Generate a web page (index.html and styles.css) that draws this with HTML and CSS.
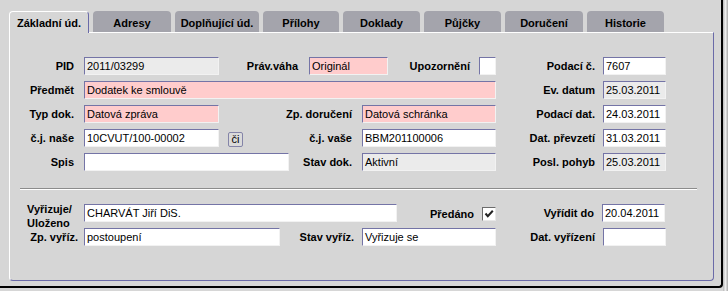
FILE: index.html
```html
<!DOCTYPE html>
<html lang="cs">
<head>
<meta charset="utf-8">
<title>Základní údaje</title>
<link rel="stylesheet" href="styles.css">
</head>
<body>
<div class="screen">
  <div class="window">
    <div class="tabs">
      <div class="tab active">Základní úd.</div>
      <div class="tab">Adresy</div>
      <div class="tab">Doplňující úd.</div>
      <div class="tab">Přílohy</div>
      <div class="tab">Doklady</div>
      <div class="tab">Půjčky</div>
      <div class="tab">Doručení</div>
      <div class="tab">Historie</div>
    </div>
    <div class="panel">
      <div class="rows">
        <div class="row">
          <div class="part">
            <span class="lbl l-first">PID</span>
            <span class="fld grey w135">2011/03299</span>
            <span class="lbl l-prav">Práv.váha</span>
            <span class="fld pink w79">Originál</span>
            <span class="lbl l-upoz">Upozornění</span>
            <span class="fld white w17"></span>
          </div>
          <span class="lbl l-right">Podací č.</span>
          <span class="fld white w63">7607</span>
        </div>
        <div class="row">
          <div class="part">
            <span class="lbl l-first">Předmět</span>
            <span class="fld pink w412">Dodatek ke smlouvě</span>
          </div>
          <span class="lbl l-right">Ev. datum</span>
          <span class="fld grey w63">25.03.2011</span>
        </div>
        <div class="row">
          <div class="part">
            <span class="lbl l-first">Typ dok.</span>
            <span class="fld pink w135">Datová zpráva</span>
            <span class="lbl l-zp">Zp. doručení</span>
            <span class="fld pink w134">Datová schránka</span>
          </div>
          <span class="lbl l-right">Podací dat.</span>
          <span class="fld white w63">24.03.2011</span>
        </div>
        <div class="row">
          <div class="part">
            <span class="lbl l-first">č.j. naše</span>
            <span class="fld white w135">10CVUT/100-00002</span>
            <span class="btn">či</span>
            <span class="lbl l-cj">č.j. vaše</span>
            <span class="fld white w134">BBM201100006</span>
          </div>
          <span class="lbl l-right">Dat. převzetí</span>
          <span class="fld white w63">31.03.2011</span>
        </div>
        <div class="row">
          <div class="part">
            <span class="lbl l-first">Spis</span>
            <span class="fld white w205"></span>
            <span class="lbl l-stav">Stav dok.</span>
            <span class="fld grey w134">Aktivní</span>
          </div>
          <span class="lbl l-right">Posl. pohyb</span>
          <span class="fld grey w63">25.03.2011</span>
        </div>
      </div>
      <div class="sep"></div>
      <div class="rows">
        <div class="row">
          <div class="part">
            <span class="lbl l-two">Vyřizuje/<br>Uloženo</span>
            <span class="fld white w313">CHARVÁT Jiří DiS.</span>
            <span class="lbl l-pred">Předáno</span>
            <span class="check"><svg width="12" height="12" viewBox="0 0 12 12"><path d="M2.5 5.5 L4.8 8.2 L9.8 2.8" fill="none" stroke="#222" stroke-width="2"/></svg></span>
          </div>
          <span class="lbl l-right2">Vyřídit do</span>
          <span class="fld white w63">20.04.2011</span>
        </div>
        <div class="row">
          <div class="part">
            <span class="lbl l-zpv">Zp. vyříz.</span>
            <span class="fld white w196">postoupení</span>
            <span class="lbl l-stavv">Stav vyříz.</span>
            <span class="fld white w134">Vyřizuje se</span>
          </div>
          <span class="lbl l-right">Dat. vyřízení</span>
          <span class="fld white w63"></span>
        </div>
      </div>
    </div>
  </div>
  <div class="edge"></div>
</div>
</body>
</html>
```
FILE: styles.css
```css
html, body {
  margin: 0;
  padding: 0;
}
body {
  background: #d6d6d6;
  font-family: "Liberation Sans", Arial, sans-serif;
  font-size: 11px;
  color: #000;
  overflow: hidden;
}
.screen {
  display: flex;
  width: 728px;
  height: 291px;
}
.window {
  flex: none;
  box-sizing: border-box;
  width: 723px;
  height: 288px;
  padding: 11px 0 0 9px;
  border-right: 2px solid #000;
  border-bottom: 2px solid #000;
  border-bottom-right-radius: 4px;
}
.edge {
  flex: 1;
  background: linear-gradient(90deg, #b8b8b8, #ededed 50%, #a8a8a8);
}

/* tabs */
.tabs {
  display: flex;
  gap: 4px;
  height: 21px;
}
.tab {
  flex: none;
  box-sizing: border-box;
  height: 21px;
  padding-top: 2px;
  background: #a4a4ac;
  border-radius: 4px 4px 0 0;
  font-weight: bold;
  display: flex;
  align-items: center;
  justify-content: center;
  white-space: nowrap;
}
.tab:nth-child(1) { width: 80px; }
.tab:nth-child(2) { width: 78px; }
.tab:nth-child(3) { width: 84px; }
.tab:nth-child(4) { width: 76px; }
.tab:nth-child(5) { width: 77px; }
.tab:nth-child(6) { width: 77px; }
.tab:nth-child(7) { width: 78px; }
.tab:nth-child(8) { width: 77px; }
.tab.active {
  position: relative;
  z-index: 1;
  height: 22px;
  background: #d6d6d6;
  border-top: 1px solid #fff;
  border-left: 1px solid #fff;
  border-right: 1px solid #6a6aa8;
  padding-top: 1px;
}

/* panel */
.panel {
  box-sizing: border-box;
  width: 705px;
  height: 249px;
  border-top: 1px solid #fff;
  border-left: 1px solid #fff;
  border-right: 1px solid #6a6aa8;
  border-bottom: 1px solid #6a6aa8;
  border-radius: 0 0 4px 4px;
  padding-top: 24px;
}
.rows {
  display: flex;
  flex-direction: column;
  gap: 6px;
}
.row {
  display: flex;
  align-items: center;
  height: 18px;
}
.part {
  display: flex;
  align-items: center;
  width: 487px;
  flex: none;
}
.lbl {
  flex: none;
  box-sizing: border-box;
  font-weight: bold;
  text-align: right;
  white-space: nowrap;
  padding-right: 10px;
}
.l-first { width: 74px; }
.l-prav { width: 90px; padding-right: 11px; }
.l-upoz { width: 91px; padding-right: 9px; }
.l-zp { width: 143px; }
.l-cj { width: 119px; }
.l-stav { width: 73px; }
.l-right { width: 106px; padding-right: 8px; }
.l-right2 { width: 105px; padding-right: 8px; }
.l-pred { width: 85px; padding-right: 8px; margin-top: 1px; }
.l-zpv { width: 74px; padding-right: 6px; }
.l-stavv { width: 82px; padding-right: 8px; }
.l-two {
  width: 74px;
  height: 18px;
  align-self: flex-start;
  margin-top: -2px;
  text-align: left;
  padding-left: 17px;
  line-height: 14px;
}

.fld {
  flex: none;
  box-sizing: border-box;
  height: 18px;
  border: 1px solid;
  border-color: #7474a6 #f2f2f2 #f2f2f2 #7474a6;
  padding: 1px 2px 0 2px;
  line-height: 15px;
  white-space: nowrap;
  overflow: hidden;
}
.white { background: #fff; }
.pink { background: #ffcccc; }
.grey { background: #ebebeb; }
.w17 { width: 17px; }
.w63 { width: 63px; }
.w79 { width: 79px; }
.w134 { width: 134px; }
.w135 { width: 135px; }
.w196 { width: 196px; }
.w205 { width: 205px; }
.w313 { width: 313px; }
.w412 { width: 412px; }

.btn {
  flex: none;
  box-sizing: border-box;
  width: 15px;
  height: 15px;
  margin-left: 9px;
  margin-top: 2px;
  border: 1px solid #8484a8;
  border-radius: 2px;
  background: #dadada;
  font-size: 11px;
  line-height: 13px;
  text-align: center;
}

.check {
  flex: none;
  box-sizing: border-box;
  width: 14px;
  height: 14px;
  margin-top: 1px;
  border: 1px solid;
  border-color: #6c6c6c #e8e8e8 #e8e8e8 #6c6c6c;
  background: #fff;
  display: flex;
}
.check svg {
  width: 12px;
  height: 12px;
}

.sep {
  margin: 17px 16px 14px 10px;
  border-top: 1px solid #8c8c8c;
  border-bottom: 1px solid #fff;
}
```
